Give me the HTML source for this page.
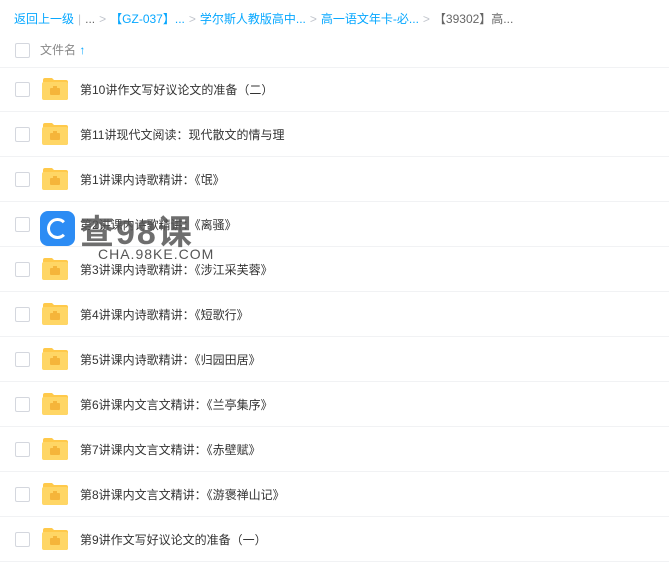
<!DOCTYPE html><html><head><meta charset="utf-8"><style>
body{margin:0;width:669px;height:583px;background:#fff;font-family:"Liberation Sans","Noto Sans CJK SC",sans-serif;overflow:hidden;position:relative}
.bc{position:absolute;top:10px;left:14px;font-size:12px;color:#06a7ff;white-space:nowrap}
.bc .g{color:#c0c4cc;margin:0 4px}.bc .d{color:#666}
.hd{position:absolute;top:38px;left:0;width:669px;height:29px;border-bottom:1px solid #f1f2f4}
.cb{position:absolute;left:15px;width:13px;height:13px;border:1px solid #d4d7de;border-radius:2px;background:#fff}
.row{position:absolute;left:0;width:669px;height:44px;border-bottom:1px solid #f1f2f4}
.row .cb{top:15px}
.row .t{position:absolute;left:80px;top:14px;font-size:12px;color:#333}
.f{position:absolute;left:42px;top:11px}
</style></head><body>
<div class="bc">返回上一级<span class="g">|</span><span class="d">...</span><span class="g">&gt;</span>【GZ-037】...<span class="g">&gt;</span>学尔斯人教版高中...<span class="g">&gt;</span>高一语文年卡-必...<span class="g">&gt;</span><span class="d">【39302】高...</span></div>
<div class="hd"><div class="cb" style="top:5px"></div><span style="position:absolute;left:40px;top:3px;font-size:12px;color:#888">文件名 <span style="color:#06a7ff;font-weight:bold">↑</span></span></div>
<div id="rows"></div>
<script>
var n=["第10讲作文写好议论文的准备（二）","第11讲现代文阅读：现代散文的情与理","第1讲课内诗歌精讲：《氓》","第2讲课内诗歌精讲：《离骚》","第3讲课内诗歌精讲：《涉江采芙蓉》","第4讲课内诗歌精讲：《短歌行》","第5讲课内诗歌精讲：《归园田居》","第6讲课内文言文精讲：《兰亭集序》","第7讲课内文言文精讲：《赤壁赋》","第8讲课内文言文精讲：《游褒禅山记》","第9讲作文写好议论文的准备（一）"];
var h="";n.forEach(function(s,i){h+='<div class="row" style="top:'+(67+45*i)+'px"><div class="cb"></div><svg class="f" width="26" height="22" viewBox="0 0 26 22"><path d="M1 2Q1 0 3 0H10L12 2H24Q26 2 26 4V20Q26 22 24 22H3Q1 22 1 20Z" fill="#ffc94a"/><rect x="0" y="4" width="26" height="18" rx="2" fill="#ffd665"/><rect x="8" y="10" width="10" height="7" rx="1" fill="#f5b53a"/><rect x="11" y="8" width="4" height="2" fill="#f5b53a"/></svg><div class="t">'+s+'</div></div>'});
document.getElementById("rows").innerHTML=h;
</script>
<div style="position:absolute;left:40px;top:211px;width:35px;height:35px;border-radius:8px;background:#2c8cf4"><div style="position:absolute;left:7px;top:7px;width:15px;height:15px;border:3px solid #fff;border-radius:50%;border-right-color:transparent"></div></div>
<div style="position:absolute;left:80px;top:205px;font-size:34px;font-weight:bold;color:#555;opacity:.85;letter-spacing:2px">查98课</div>
<div style="position:absolute;left:98px;top:246px;font-size:14px;color:#555;letter-spacing:1px">CHA.98KE.COM</div>
</body></html>
